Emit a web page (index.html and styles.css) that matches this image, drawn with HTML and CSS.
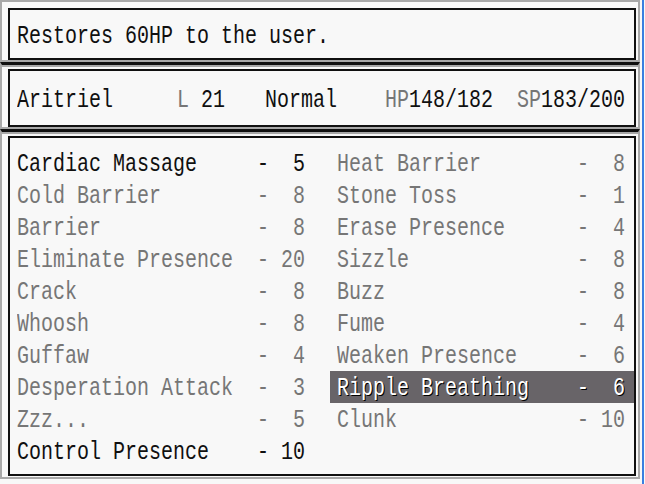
FILE: index.html
```html
<!DOCTYPE html>
<html lang="en">
<head>
  <meta charset="UTF-8">
  <title>Skills</title>
  <link rel="stylesheet" href="styles.css">
</head>
<body>

  <div class="screen">

    <div class="win help">
      <div class="box">
        <span class="txt">Restores 60HP to the user.</span>
      </div>
    </div>

    <div class="win status">
      <div class="box">
        <span class="txt name">Aritriel</span>
        <span class="txt level"><span class="dim">L</span> 21</span>
        <span class="txt state">Normal</span>
        <span class="txt hp"><span class="dim">HP</span>148/182</span>
        <span class="txt"><span class="dim">SP</span>183/200</span>
      </div>
    </div>

    <div class="win skills">
      <div class="box">
        <div class="skill-grid">
          <div class="cell"><span class="txt">Cardiac Massage</span><span class="txt">-  5</span></div>
          <div class="cell off"><span class="txt">Heat Barrier</span><span class="txt">-  8</span></div>
          <div class="cell off"><span class="txt">Cold Barrier</span><span class="txt">-  8</span></div>
          <div class="cell off"><span class="txt">Stone Toss</span><span class="txt">-  1</span></div>
          <div class="cell off"><span class="txt">Barrier</span><span class="txt">-  8</span></div>
          <div class="cell off"><span class="txt">Erase Presence</span><span class="txt">-  4</span></div>
          <div class="cell off"><span class="txt">Eliminate Presence</span><span class="txt">- 20</span></div>
          <div class="cell off"><span class="txt">Sizzle</span><span class="txt">-  8</span></div>
          <div class="cell off"><span class="txt">Crack</span><span class="txt">-  8</span></div>
          <div class="cell off"><span class="txt">Buzz</span><span class="txt">-  8</span></div>
          <div class="cell off"><span class="txt">Whoosh</span><span class="txt">-  8</span></div>
          <div class="cell off"><span class="txt">Fume</span><span class="txt">-  4</span></div>
          <div class="cell off"><span class="txt">Guffaw</span><span class="txt">-  4</span></div>
          <div class="cell off"><span class="txt">Weaken Presence</span><span class="txt">-  6</span></div>
          <div class="cell off"><span class="txt">Desperation Attack</span><span class="txt">-  3</span></div>
          <div class="cell selected"><span class="txt">Ripple Breathing</span><span class="txt">-  6</span></div>
          <div class="cell off"><span class="txt">Zzz...</span><span class="txt">-  5</span></div>
          <div class="cell off"><span class="txt">Clunk</span><span class="txt">- 10</span></div>
          <div class="cell"><span class="txt">Control Presence</span><span class="txt">- 10</span></div>
          <div class="cell"></div>
        </div>
      </div>
    </div>

  </div>

</body>
</html>
```

FILE: styles.css
```css
* {
  margin: 0;
  padding: 0;
  box-sizing: border-box;
}

body {
  width: 645px;
  height: 484px;
  overflow: hidden;
  background: #f8f8f8;
  font-family: "Liberation Mono", monospace;
  font-size: 20px;
  color: #101010;
}

.screen {
  width: 644px;
  height: 484px;
  border-right: 2px solid #3a7fe0;
}

/* window frame: grey rim, light gap, black inner box */
.win {
  width: 640px;
  border: 2px solid #a8a8a8;
  padding: 6px 2px 0 6px;
}

/* stacked windows share a thick black seam */
.win + .win {
  border-top: 3px solid #101010;
  padding-top: 4px;
  background: linear-gradient(#a8a8a8 0 2px, transparent 2px);
}

.box {
  border: 2px solid #101010;
  background: #f8f8f8;
  padding: 0 7px;
}

.txt {
  display: inline-block;
  white-space: pre;
  transform: scaleY(1.3);
}

.dim {
  color: #767676;
}

.help .box {
  height: 52px;
  padding-top: 3px;
  display: flex;
  align-items: center;
}

.status .box {
  height: 58px;
  padding-top: 2px;
  display: flex;
  align-items: center;
}

.status .name { width: 160px; }
.status .level { width: 88px; }
.status .state { width: 120px; }
.status .hp { width: 132px; }

.skills {
  padding-bottom: 1px;
}

.skills .box {
  height: 340px;
  padding: 9px 0 0;
}

.skill-grid {
  display: grid;
  grid-template-columns: 304px 304px;
  column-gap: 16px;
}

.cell {
  height: 32px;
  display: flex;
  align-items: center;
  justify-content: space-between;
  padding: 0 9px 0 7px;
}

.cell.off {
  color: #767676;
}

.cell.selected {
  background: #686468;
  color: #fff;
  text-shadow: 1px 1px 0 #000;
}
```
